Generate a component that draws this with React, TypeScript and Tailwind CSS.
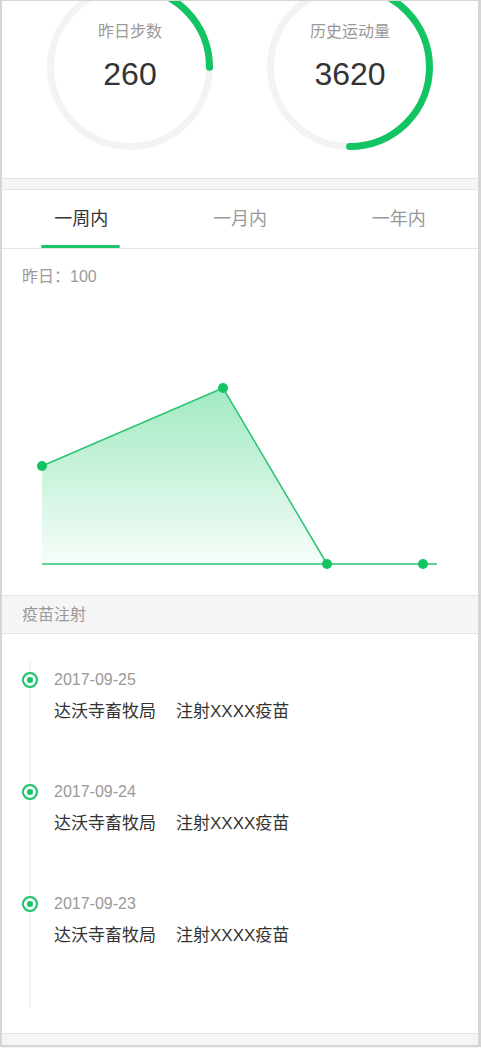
import React from 'react';

const GREEN = '#12c462';
const FONT = { fontFamily: '"Liberation Sans", "Noto Sans CJK SC", sans-serif' };

interface RingProps {
  label: string;
  value: string;
  percent: number;
}

function Ring({ label, value, percent }: RingProps) {
  const r = 79.5;
  const c = 2 * Math.PI * r;
  return (
    <div className="relative w-[166px] h-[166px] shrink-0 flex flex-col items-center pt-[37px]">
      <svg className="absolute inset-0" width="166" height="166" viewBox="0 0 166 166">
        <circle cx="83" cy="83" r={r} fill="none" stroke="#f2f3f5" strokeWidth="7" />
        <circle
          cx="83"
          cy="83"
          r={r}
          fill="none"
          stroke={GREEN}
          strokeWidth="7"
          strokeLinecap="round"
          strokeDasharray={`${c * percent} ${c}`}
          transform="rotate(-90 83 83)"
        />
      </svg>
      <div className="relative text-[16px] leading-[22px] text-[#999999]">{label}</div>
      <div className="relative mt-[11px] text-[32px] leading-[40px] text-[#333333]">{value}</div>
    </div>
  );
}

const tabs = ['一周内', '一月内', '一年内'];

const records = [
  { date: '2017-09-25', org: '达沃寺畜牧局', act: '注射XXXX疫苗' },
  { date: '2017-09-24', org: '达沃寺畜牧局', act: '注射XXXX疫苗' },
  { date: '2017-09-23', org: '达沃寺畜牧局', act: '注射XXXX疫苗' }
];

function Chart() {
  const pts = [
    [42, 466],
    [223, 388],
    [327, 564],
    [423, 564]
  ];
  return (
    <svg width="477" height="307" viewBox="2 288 477 307" className="block">
      <defs>
        <linearGradient id="area" x1="0" y1="388" x2="0" y2="570" gradientUnits="userSpaceOnUse">
          <stop offset="0" stopColor="#2fcf78" stopOpacity="0.45" />
          <stop offset="1" stopColor="#2fcf78" stopOpacity="0.03" />
        </linearGradient>
      </defs>
      <polygon points="42,466 223,388 327,564 42,564" fill="url(#area)" />
      <line x1="42" y1="564" x2="437" y2="564" stroke="#2bc470" strokeWidth="1.5" />
      <polyline points="42,466 223,388 327,564" fill="none" stroke="#2bc470" strokeWidth="1.5" />
      {pts.map(([x, y]) => (
        <circle key={`${x}-${y}`} cx={x} cy={y} r="5" fill={GREEN} />
      ))}
    </svg>
  );
}

export default function App() {
  return (
    <div style={FONT} className="w-[481px] min-h-[1048px] bg-[#f5f5f5]">
      <div className="w-[481px] border-l-2 border-r-[3px] border-t border-b-2 border-[#d6d6d6] bg-white">
        {/* stats */}
        <div className="h-[178px] overflow-hidden border-b border-[#e3e3e3]">
          <div className="flex pl-[45px] gap-[54px] -mt-[17px]">
            <Ring label="昨日步数" value="260" percent={0.25} />
            <Ring label="历史运动量" value="3620" percent={0.5} />
          </div>
        </div>
        <div className="h-[11px] bg-[#f5f5f5] border-b border-[#e6e6e6]" />

        {/* tabs */}
        <div className="grid grid-cols-3 h-[59px] border-b border-[#e6e6e6]">
          {tabs.map((t, i) => (
            <div key={t} className="relative flex items-center justify-center">
              <span className={`text-[18px] leading-[24px] ${i === 0 ? 'text-[#333333]' : 'text-[#999999]'}`}>
                {t}
              </span>
              {i === 0 && <div className="absolute bottom-0 left-[39px] w-[79px] h-[3px] rounded-full bg-[#1ec46a]" />}
            </div>
          ))}
        </div>

        {/* chart */}
        <div className="pt-[17px]">
          <div className="px-[20px] text-[16px] leading-[22px] text-[#999999]">昨日：100</div>
          <Chart />
        </div>

        {/* timeline */}
        <div className="h-[39px] flex items-center px-[20px] bg-[#f5f5f5] border-y border-[#e6e6e6] text-[16px] text-[#999999]">
          疫苗注射
        </div>
        <div className="pt-[28px] pb-[25px]">
          <div className="ml-[27px] border-l-2 border-[#f2f2f2] pl-[23px] pt-[7px] pb-[60px] flex flex-col gap-[57px]">
            {records.map((r) => (
              <div key={r.date} className="relative">
                <div className="absolute -left-[32px] top-[3px] w-[16px] h-[16px] rounded-full border-2 border-[#12c462] bg-white flex items-center justify-center">
                  <div className="w-[6px] h-[6px] rounded-full bg-[#12c462]" />
                </div>
                <div className="text-[16px] leading-[22px] text-[#999999]">{r.date}</div>
                <div className="mt-[9px] text-[17px] leading-[24px] text-[#333333] flex">
                  <span>{r.org}</span>
                  <span className="ml-[20px]">{r.act}</span>
                </div>
              </div>
            ))}
          </div>
        </div>
        <div className="h-[12px] bg-[#f5f5f5] border-t border-[#e3e3e3]" />
      </div>
    </div>
  );
}
